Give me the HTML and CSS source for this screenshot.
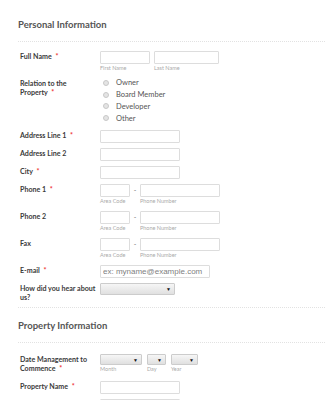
FILE: index.html
```html
<!DOCTYPE html>
<html lang="en">
<head>
  <meta charset="UTF-8">
  <title>Property Form</title>
  <link rel="stylesheet" href="styles.css">
</head>
<body>
  <div class="form">
    <div class="section">
      <h2 class="section-title">Personal Information</h2>
    </div>

    <div class="row">
      <label class="label">Full Name <span class="req">*</span></label>
      <div class="field">
        <div class="sub">
          <input class="box w50" type="text">
          <span class="hint">First Name</span>
        </div>
        <div class="sub">
          <input class="box w65" type="text">
          <span class="hint">Last Name</span>
        </div>
      </div>
    </div>

    <div class="row">
      <label class="label">Relation to the<br>Property <span class="req">*</span></label>
      <div class="field radios">
        <div class="radio"><span class="dot"></span>Owner</div>
        <div class="radio"><span class="dot"></span>Board Member</div>
        <div class="radio"><span class="dot"></span>Developer</div>
        <div class="radio"><span class="dot"></span>Other</div>
      </div>
    </div>

    <div class="row">
      <label class="label">Address Line 1 <span class="req">*</span></label>
      <div class="field"><input class="box w80" type="text"></div>
    </div>
    <div class="row">
      <label class="label">Address Line 2</label>
      <div class="field"><input class="box w80" type="text"></div>
    </div>
    <div class="row">
      <label class="label">City <span class="req">*</span></label>
      <div class="field"><input class="box w80" type="text"></div>
    </div>

    <div class="row">
      <label class="label">Phone 1 <span class="req">*</span></label>
      <div class="field phone">
        <div class="sub"><input class="box w30" type="text"><span class="hint">Area Code</span></div>
        <span class="dash">-</span>
        <div class="sub"><input class="box w80" type="text"><span class="hint">Phone Number</span></div>
      </div>
    </div>
    <div class="row">
      <label class="label">Phone 2</label>
      <div class="field phone">
        <div class="sub"><input class="box w30" type="text"><span class="hint">Area Code</span></div>
        <span class="dash">-</span>
        <div class="sub"><input class="box w80" type="text"><span class="hint">Phone Number</span></div>
      </div>
    </div>
    <div class="row">
      <label class="label">Fax</label>
      <div class="field phone">
        <div class="sub"><input class="box w30" type="text"><span class="hint">Area Code</span></div>
        <span class="dash">-</span>
        <div class="sub"><input class="box w80" type="text"><span class="hint">Phone Number</span></div>
      </div>
    </div>

    <div class="row">
      <label class="label">E-mail <span class="req">*</span></label>
      <div class="field"><input class="box w110 email" type="text" placeholder="ex: myname@example.com"></div>
    </div>

    <div class="row">
      <label class="label">How did you hear about<br>us?</label>
      <div class="field"><div class="select w75 tall"><span class="arrow">&#9660;</span></div></div>
    </div>

    <div class="section second">
      <h2 class="section-title">Property Information</h2>
    </div>

    <div class="row date-row">
      <label class="label">Date Management to<br>Commence <span class="req">*</span></label>
      <div class="field date">
        <div class="sub"><div class="select w42"><span class="arrow">&#9660;</span></div><span class="hint">Month</span></div>
        <div class="sub"><div class="select w19"><span class="arrow">&#9660;</span></div><span class="hint">Day</span></div>
        <div class="sub"><div class="select w27"><span class="arrow">&#9660;</span></div><span class="hint">Year</span></div>
      </div>
    </div>

    <div class="row">
      <label class="label">Property Name <span class="req">*</span></label>
      <div class="field"><input class="box w80" type="text"></div>
    </div>
    <div class="row">
      <label class="label"></label>
      <div class="field"><input class="box w80" type="text"></div>
    </div>
  </div>
</body>
</html>
```

FILE: styles.css
```css
body {
  margin: 0;
  background: #fff;
  font-family: Lato, "Noto Sans", sans-serif;
  color: #333;
}
.form {
  padding: 0 0 0 18px;
}
.section {
  border-bottom: 1px dotted #e2e2e2;
  padding-top: 19px;
  height: 22px;
  margin-bottom: 9px;
}
.section.second {
  border-top: 1px dotted #e2e2e2;
  margin-top: 4px;
  padding-top: 12px;
  height: 22px;
  margin-bottom: 11px;
}
.section-title {
  margin: 0;
  font-size: 9.5px;
  line-height: 11px;
  font-weight: bold;
  color: #555;
}
.row {
  display: flex;
  margin-bottom: 5px;
}
.date-row {
  margin-bottom: 7px;
}
.label {
  width: 82px;
  flex-shrink: 0;
  padding: 2px 0 0 2px;
  box-sizing: border-box;
  font-size: 7.1px;
  font-weight: bold;
  line-height: 8.5px;
  white-space: nowrap;
  color: #3a3a3a;
}
.req {
  color: #e33;
  margin-left: 2px;
}
.field {
  display: flex;
  gap: 4px;
}
.field.phone {
  gap: 2px;
}
.field.date {
  gap: 5px;
}
.sub {
  display: flex;
  flex-direction: column;
}
.box {
  height: 13px;
  box-sizing: border-box;
  border: 1px solid #ddd;
  border-radius: 1px;
  margin: 0;
  padding: 0 2px;
  font-family: "Liberation Sans", Arial, sans-serif;
  font-size: 8px;
}
.email::placeholder {
  color: #808080;
}
.hint {
  font-size: 5.5px;
  line-height: 9px;
  color: #aaa;
}
.dash {
  font-size: 7px;
  color: #777;
  line-height: 13px;
  width: 6px;
  text-align: center;
}
.w19 { width: 19px; }
.w27 { width: 27px; }
.w30 { width: 30px; }
.w42 { width: 42px; }
.w50 { width: 50px; }
.w65 { width: 65px; }
.w75 { width: 75px; }
.w80 { width: 80px; }
.w110 { width: 110px; }
.radios {
  flex-direction: column;
  gap: 0;
  margin-top: -1px;
  padding-bottom: 1px;
}
.radio {
  display: flex;
  align-items: center;
  height: 11.8px;
  font-size: 7.5px;
  color: #555;
}
.dot {
  width: 4px;
  height: 4px;
  border-radius: 50%;
  background: #e4e4e4;
  border: 1px solid #c8c8c8;
  margin: 0 7px 0 3px;
}
.select {
  height: 11px;
  box-sizing: border-box;
  border: 1px solid #ccc;
  border-radius: 1px;
  background: linear-gradient(#f6f6f6, #e0e0e0);
  position: relative;
}
.select.tall {
  height: 12px;
}
.arrow {
  position: absolute;
  right: 3px;
  top: 2px;
  font-size: 5px;
  line-height: 6px;
  color: #111;
}
```
